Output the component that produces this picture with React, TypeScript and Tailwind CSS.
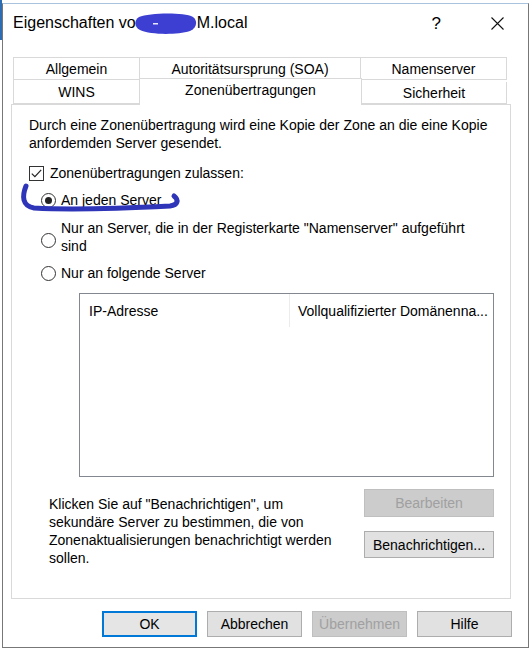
import React from "react";

const topTabs = [
    { name: "Allgemein", w: "w-[126px]" },
    { name: "Autoritätsursprung (SOA)", w: "w-[221px]" },
    { name: "Namenserver", w: "w-[147px]" },
];

function Radio({ checked }: { checked?: boolean }) {
    return (
        <span className="w-[15px] h-[15px] rounded-full border border-[#333] bg-white flex items-center justify-center flex-shrink-0">
            {checked && <span className="w-[7px] h-[7px] rounded-full bg-[#222]" />}
        </span>
    );
}

function Btn({ label, disabled, primary, w = "w-[95px]", h = "h-[26px]" }: { label: string; disabled?: boolean; primary?: boolean; w?: string; h?: string }) {
    return (
        <button
            className={`${w} ${h} flex items-center justify-center text-[14px] ${disabled
                ? "bg-[#cccccc] border border-[#bfbfbf] text-[#a0a0a0]"
                : primary
                    ? "bg-[#e5e5e5] border-2 border-[#0078d7] text-black"
                    : "bg-[#e1e1e1] border border-[#adadad] text-black"
                }`}
        >
            {label}
        </button>
    );
}

export default function App() {
    return (
        <div className="relative w-[531px] h-[652px] bg-white overflow-hidden text-black" style={{ fontFamily: '"Liberation Sans", Arial, sans-serif' }}>
            {/* window behind */}
            <div className="absolute left-0 top-0 w-[2px] h-[40px] bg-[#2d6db4]" />

            <div className="ml-[2px] mt-[3px] w-[527px] h-[645px] border border-[#777] border-t-[#a9c2de] flex flex-col">
                {/* Title bar */}
                <div className="h-[38px] flex items-center pl-[10px] pr-[24px]">
                    <div className="flex items-center text-[16px] leading-none">
                        <span>Eigenschaften vo</span>
                        <svg width="62" height="21" viewBox="0 0 62 21" className="-ml-[1px]">
                            <path d="M4 4 C 14 0, 48 -1, 58 4 C 63 8, 62 15, 55 18 C 42 22, 16 22, 5 17 C -1 14, -1 7, 4 4 Z" fill="#3c3fd2" />
                            <rect x="18" y="10" width="5" height="1.5" fill="#e8e8ff" />
                        </svg>
                        <span>M.local</span>
                    </div>
                    <div className="ml-auto flex items-center gap-[50px]">
                        <span className="text-[17px] leading-none">?</span>
                        <svg width="13" height="13" viewBox="0 0 13 13">
                            <path d="M0.5 0.5 L12.5 12.5 M12.5 0.5 L0.5 12.5" stroke="#111" strokeWidth="1.1" />
                        </svg>
                    </div>
                </div>

                {/* Tabs */}
                <div className="mt-[15px] ml-[10px] flex flex-col text-[14px] leading-none">
                    <div className="flex h-[23px]">
                        {topTabs.map((t) => (
                            <div key={t.name} className={`${t.w} border border-[#d9d9d9] border-r-0 last:border-r flex items-center justify-center`}>
                                {t.name}
                            </div>
                        ))}
                    </div>
                    <div className="flex h-[24px] items-end">
                        <div className="w-[126px] h-[24px] border-l border-b border-[#d9d9d9] flex items-center justify-center">WINS</div>
                        <div className="relative z-10 w-[223px] h-[27px] -mb-px bg-white border border-b-0 border-[#d9d9d9] flex items-center justify-center pb-[4px]">
                            Zonenübertragungen
                        </div>
                        <div className="w-[145px] h-[22px] border-r border-b border-[#d9d9d9] flex items-center justify-center">Sicherheit</div>
                    </div>
                </div>

                {/* Panel */}
                <div className="ml-[8px] w-[500px] h-[495px] border border-[#d9d9d9] pl-[17px] pr-[16px] pt-[11px] flex flex-col text-[14px] leading-[18px]">
                    <p>
                        Durch eine Zonenübertragung wird eine Kopie der Zone an die eine Kopie
                        <br />
                        anfordemden Server gesendet.
                    </p>

                    <label className="mt-[12px] flex items-center gap-[6px] h-[18px]">
                        <span className="w-[15px] h-[15px] border border-[#333] bg-white flex items-center justify-center">
                            <svg width="11" height="9" viewBox="0 0 11 9">
                                <path d="M0.8 4.6 L3.9 7.7 L10.2 0.8" fill="none" stroke="#222" strokeWidth="1.2" />
                            </svg>
                        </span>
                        Zonenübertragungen zulassen:
                    </label>

                    <label className="mt-[9px] ml-[12px] flex items-center gap-[5px] h-[18px]">
                        <Radio checked />
                        An jeden Server
                    </label>

                    <label className="mt-[10px] ml-[12px] flex items-end gap-[5px]">
                        <span className="mb-[7px]">
                            <Radio />
                        </span>
                        <span>
                            Nur an Server, die in der Registerkarte "Namenserver" aufgeführt
                            <br />
                            sind
                        </span>
                    </label>

                    <label className="mt-[9px] ml-[12px] flex items-center gap-[5px] h-[18px]">
                        <Radio />
                        Nur an folgende Server
                    </label>

                    {/* Server list */}
                    <div className="mt-[11px] ml-[50px] w-[415px] h-[184px] border border-[#828790] bg-white flex items-start">
                        <div className="w-[210px] h-[33px] border-r border-[#ececec] pl-[9px] flex items-center">IP-Adresse</div>
                        <div className="flex-1 h-[33px] pl-[8px] flex items-center">Vollqualifizierter Domänenna...</div>
                    </div>

                    <div className="mt-[12px] flex justify-between">
                        <p className="mt-[6px] ml-[20px]">
                            Klicken Sie auf "Benachrichtigen", um
                            <br />
                            sekundäre Server zu bestimmen, die von
                            <br />
                            Zonenaktualisierungen benachrichtigt werden
                            <br />
                            sollen.
                        </p>
                        <div className="flex flex-col gap-[14px]">
                            <Btn label="Bearbeiten" disabled w="w-[130px]" h="h-[28px]" />
                            <Btn label="Benachrichtigen..." w="w-[130px]" h="h-[27px]" />
                        </div>
                    </div>
                </div>

                {/* Dialog buttons */}
                <div className="mt-[12px] pr-[16px] flex justify-end gap-[10px]">
                    <Btn label="OK" primary />
                    <Btn label="Abbrechen" />
                    <Btn label="Übernehmen" disabled />
                    <Btn label="Hilfe" />
                </div>
            </div>

            {/* hand-drawn annotation */}
            <svg className="absolute left-0 top-0 pointer-events-none" width="531" height="652">
                <path d="M26 186 C 22 196, 22 206, 34 208 C 70 210, 130 208, 170 206 C 178 205, 179 200, 174 196" fill="none" stroke="#2f35b8" strokeWidth="5" strokeLinecap="round" />
            </svg>
        </div>
    );
}
